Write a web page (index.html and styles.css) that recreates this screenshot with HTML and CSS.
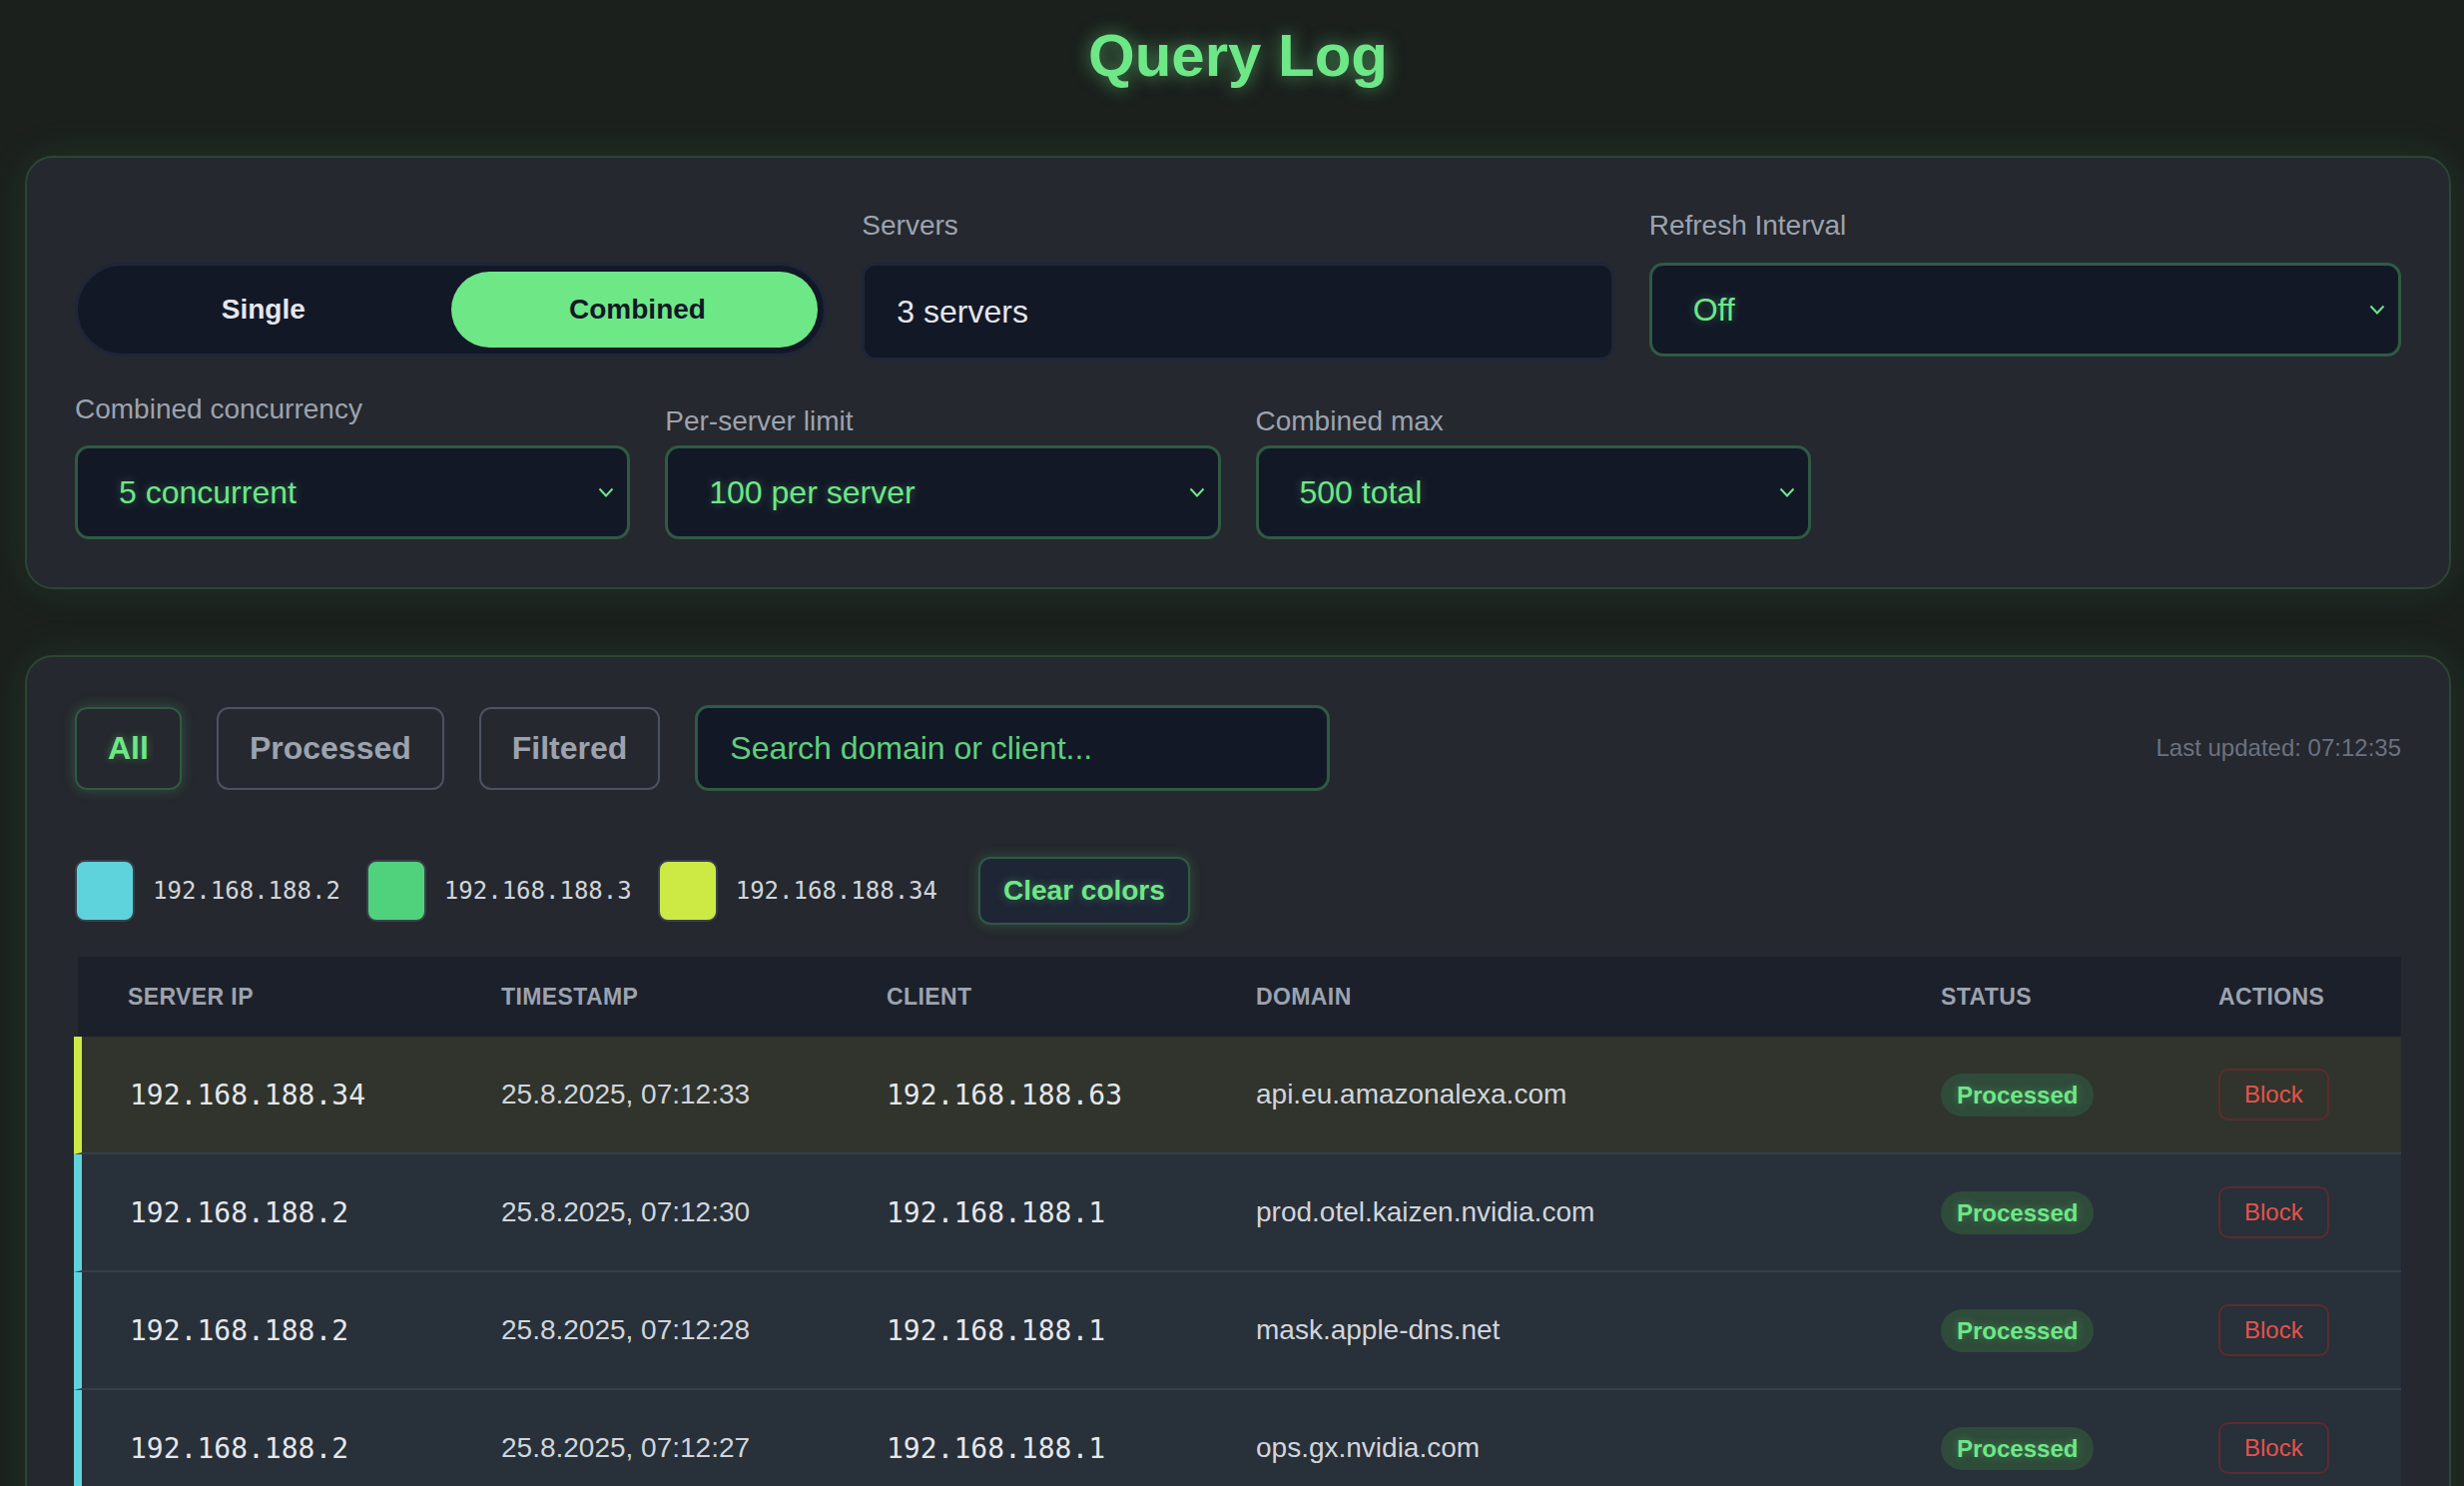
FILE: index.html
```html
<!DOCTYPE html>
<html lang="en">
<head>
<meta charset="utf-8">
<title>Query Log</title>
<link rel="stylesheet" href="styles.css">
</head>
<body>
<div class="page">
  <h1 class="title">Query Log</h1>

  <section class="panel panel--settings">
    <div class="row row--top">
      <div class="field field--toggle">
        <div class="toggle">
          <button class="toggle__opt toggle__opt--single">Single</button>
          <button class="toggle__opt toggle__opt--active">Combined</button>
        </div>
      </div>
      <div class="field">
        <div class="label">Servers</div>
        <div class="servers-box">3 servers</div>
      </div>
      <div class="field">
        <div class="label">Refresh Interval</div>
        <div class="select">
          <span>Off</span>
          <svg class="chev" width="16" height="10" viewBox="0 0 16 10"><polyline points="1.5,1.5 8,8.5 14.5,1.5" fill="none" stroke="#6ee787" stroke-width="2"/></svg>
        </div>
      </div>
    </div>
    <div class="row row--bottom">
      <div class="field">
        <div class="label label--first">Combined concurrency</div>
        <div class="select">
          <span>5 concurrent</span>
          <svg class="chev" width="16" height="10" viewBox="0 0 16 10"><polyline points="1.5,1.5 8,8.5 14.5,1.5" fill="none" stroke="#6ee787" stroke-width="2"/></svg>
        </div>
      </div>
      <div class="field">
        <div class="label label--tight">Per-server limit</div>
        <div class="select">
          <span>100 per server</span>
          <svg class="chev" width="16" height="10" viewBox="0 0 16 10"><polyline points="1.5,1.5 8,8.5 14.5,1.5" fill="none" stroke="#6ee787" stroke-width="2"/></svg>
        </div>
      </div>
      <div class="field">
        <div class="label label--tight">Combined max</div>
        <div class="select">
          <span>500 total</span>
          <svg class="chev" width="16" height="10" viewBox="0 0 16 10"><polyline points="1.5,1.5 8,8.5 14.5,1.5" fill="none" stroke="#6ee787" stroke-width="2"/></svg>
        </div>
      </div>
      <div class="field"></div>
    </div>
  </section>

  <section class="panel panel--log">
    <div class="filters">
      <button class="filter filter--active">All</button>
      <button class="filter">Processed</button>
      <button class="filter">Filtered</button>
      <input class="search" type="text" placeholder="Search domain or client...">
      <div class="updated">Last updated: 07:12:35</div>
    </div>

    <div class="legend">
      <div class="legend__item"><span class="swatch swatch--cyan"></span><span class="legend__ip">192.168.188.2</span></div>
      <div class="legend__item"><span class="swatch swatch--green"></span><span class="legend__ip">192.168.188.3</span></div>
      <div class="legend__item"><span class="swatch swatch--lime"></span><span class="legend__ip">192.168.188.34</span></div>
      <button class="clear-btn">Clear colors</button>
    </div>

    <div class="table">
      <div class="thead">
        <div class="th">Server IP</div>
        <div class="th">Timestamp</div>
        <div class="th">Client</div>
        <div class="th">Domain</div>
        <div class="th">Status</div>
        <div class="th">Actions</div>
      </div>

      <div class="tr tr--lime">
        <div class="td mono">192.168.188.34</div>
        <div class="td">25.8.2025, 07:12:33</div>
        <div class="td mono">192.168.188.63</div>
        <div class="td">api.eu.amazonalexa.com</div>
        <div class="td"><span class="pill">Processed</span></div>
        <div class="td"><button class="block-btn">Block</button></div>
      </div>
      <div class="tr tr--cyan">
        <div class="td mono">192.168.188.2</div>
        <div class="td">25.8.2025, 07:12:30</div>
        <div class="td mono">192.168.188.1</div>
        <div class="td">prod.otel.kaizen.nvidia.com</div>
        <div class="td"><span class="pill">Processed</span></div>
        <div class="td"><button class="block-btn">Block</button></div>
      </div>
      <div class="tr tr--cyan">
        <div class="td mono">192.168.188.2</div>
        <div class="td">25.8.2025, 07:12:28</div>
        <div class="td mono">192.168.188.1</div>
        <div class="td">mask.apple-dns.net</div>
        <div class="td"><span class="pill">Processed</span></div>
        <div class="td"><button class="block-btn">Block</button></div>
      </div>
      <div class="tr tr--cyan">
        <div class="td mono">192.168.188.2</div>
        <div class="td">25.8.2025, 07:12:27</div>
        <div class="td mono">192.168.188.1</div>
        <div class="td">ops.gx.nvidia.com</div>
        <div class="td"><span class="pill">Processed</span></div>
        <div class="td"><button class="block-btn">Block</button></div>
      </div>
    </div>
  </section>
</div>
</body>
</html>
```

FILE: styles.css
```css
* { box-sizing: border-box; }

html, body {
  margin: 0;
  padding: 0;
}

body {
  background: #1b201d;
  font-family: "Liberation Sans", Arial, sans-serif;
  color: #d1d5db;
  min-height: 1488px;
}

.page {
  padding: 0 13px 40px 25px;
}

.title {
  margin: 21px 0 66px;
  text-align: center;
  font-size: 60px;
  line-height: 69px;
  font-weight: 700;
  color: #6ee787;
  text-shadow: 0 0 18px rgba(110, 231, 135, 0.55);
}

.panel {
  background: #25282e;
  border: 2px solid #2b4634;
  border-radius: 28px;
  padding: 48px;
  box-shadow: 0 0 40px rgba(70, 190, 100, 0.12);
}

.panel--log {
  margin-top: 66px;
}

/* settings rows */
.row {
  display: grid;
  column-gap: 35px;
}

.row--top {
  grid-template-columns: repeat(3, 1fr);
  align-items: start;
}

.row--bottom {
  grid-template-columns: repeat(4, 1fr);
  align-items: end;
  margin-top: 29px;
}

.field {
  display: flex;
  flex-direction: column;
}

.field--toggle {
  padding-top: 57px;
}

.label {
  font-size: 28px;
  line-height: 40px;
  color: #9ca3af;
  margin-bottom: 17px;
}

.label--first { margin-bottom: 16px; }
.label--tight { margin-bottom: 4px; }

.toggle {
  display: grid;
  grid-template-columns: 1fr 1fr;
  height: 94px;
  padding: 6px;
  background: #131827;
  border: 3px solid #1e2638;
  border-radius: 47px;
}

.toggle__opt {
  border: none;
  background: transparent;
  font-family: "Liberation Sans", Arial, sans-serif;
  font-size: 28px;
  font-weight: 700;
  color: #e5e7eb;
  border-radius: 38px;
  padding: 0;
}

.toggle__opt--single {
  padding-right: 8px;
}

.toggle__opt--active {
  background: #6ee787;
  color: #111827;
  padding-left: 6px;
}

.servers-box {
  height: 98px;
  display: flex;
  align-items: center;
  padding: 0 32px;
  background: #131827;
  border: 3px solid #1e2638;
  border-radius: 14px;
  font-size: 32px;
  color: #e5e7eb;
}

.select {
  height: 94px;
  display: flex;
  align-items: center;
  justify-content: space-between;
  padding: 0 13px 0 41px;
  background: #131827;
  border: 3px solid #2f5a44;
  border-radius: 14px;
  font-size: 32px;
  color: #6ee787;
  text-shadow: 0 0 8px rgba(110, 231, 135, 0.35);
}

.chev { flex: none; }

/* filters */
.filters {
  display: flex;
  align-items: center;
  gap: 35px;
  height: 86px;
}

.filter {
  font-family: "Liberation Sans", Arial, sans-serif;
  font-size: 32px;
  line-height: 37px;
  font-weight: 700;
  padding: 21px 31px;
  border: 2px solid #4b5263;
  border-radius: 12px;
  background: transparent;
  color: #9ca3af;
}

.filter--active {
  color: #6ee787;
  border-color: #2f5a44;
  box-shadow: 0 0 14px rgba(110, 231, 135, 0.22);
  text-shadow: 0 0 8px rgba(110, 231, 135, 0.4);
}

.search {
  width: 636px;
  height: 86px;
  padding: 0 32px;
  background: #131827;
  border: 3px solid #2f5a44;
  border-radius: 14px;
  font-family: "Liberation Sans", Arial, sans-serif;
  font-size: 32px;
  color: #6ee787;
  outline: none;
}

.search::placeholder {
  color: #5fcf7b;
}

.updated {
  margin-left: auto;
  font-size: 24px;
  color: #6b7280;
}

/* legend */
.legend {
  display: flex;
  align-items: center;
  gap: 26px;
  margin-top: 66px;
  height: 68px;
}

.legend__item {
  display: flex;
  align-items: center;
  gap: 18px;
}

.swatch {
  width: 60px;
  height: 62px;
  border-radius: 10px;
  border: 2px solid #3a414e;
}

.swatch--cyan { background: #5fd3dc; }
.swatch--green { background: #50d27c; }
.swatch--lime { background: #cdea44; }

.legend__ip {
  font-family: "DejaVu Sans Mono", "Liberation Mono", monospace;
  font-size: 24px;
  color: #d1d5db;
}

.clear-btn {
  margin-left: 15px;
  height: 68px;
  padding: 0 23px;
  font-family: "Liberation Sans", Arial, sans-serif;
  font-size: 28px;
  font-weight: 700;
  color: #6ee787;
  background: #1e2636;
  border: 2px solid #2f5a44;
  border-radius: 12px;
  box-shadow: 0 0 14px rgba(110, 231, 135, 0.2);
  text-shadow: 0 0 8px rgba(110, 231, 135, 0.35);
}

/* table */
.table {
  margin-top: 32px;
  margin-left: -1px;
}

.thead,
.tr {
  display: grid;
  grid-template-columns: 1fr 386px 370px 686px 278px 231px;
  align-items: center;
}

.thead {
  margin-left: 4px;
  height: 80px;
  background: #1c202b;
}

.th {
  padding-left: 48px;
  font-size: 23px;
  font-weight: 700;
  text-transform: uppercase;
  letter-spacing: 0.4px;
  color: #9ca3af;
}

.th:first-child { padding-left: 50px; }

.tr {
  height: 118px;
  background: #283039;
  border-left: 8px solid #5fd3dc;
  border-bottom: 2px solid #363e4b;
}

.tr--lime {
  background: #30342c;
  border-left-color: #cdea44;
}

.tr--cyan { border-left-color: #5fd3dc; }

.td {
  padding-left: 48px;
  font-size: 28px;
  color: #d1d5db;
  white-space: nowrap;
}

.td.mono {
  font-family: "DejaVu Sans Mono", "Liberation Mono", monospace;
  color: #e5e7eb;
}

.pill {
  display: inline-block;
  padding: 8px 16px;
  line-height: 27px;
  border-radius: 22px;
  background: #2f4b3a;
  color: #6ee787;
  font-size: 24px;
  font-weight: 700;
  text-shadow: 0 0 8px rgba(110, 231, 135, 0.35);
}

.block-btn {
  font-family: "Liberation Sans", Arial, sans-serif;
  font-size: 24px;
  line-height: 28px;
  padding: 10px 24px;
  background: transparent;
  color: #e5534b;
  border: 2px solid #5b2c2f;
  border-radius: 10px;
}
```
